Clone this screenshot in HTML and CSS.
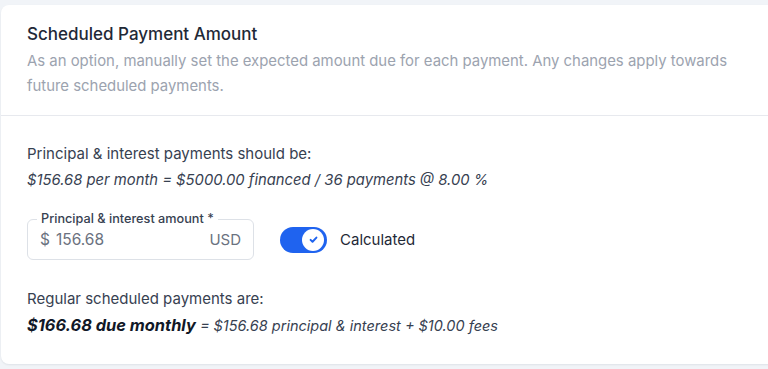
FILE: index.html
```html
<!DOCTYPE html>
<html lang="en">
<head>
    <meta charset="UTF-8">
    <meta name="viewport" content="width=device-width, initial-scale=1.0">
    <title>Scheduled Payment Amount</title>
    <link rel="stylesheet" href="styles.css">
</head>
<body>
    <div class="card">
        <div class="card-header">
            <h2 class="card-title">Scheduled Payment Amount</h2>
            <p class="card-desc">As an option, manually set the expected amount due for each payment. Any changes apply towards future scheduled payments.</p>
        </div>
        <div class="card-body">
            <div class="summary">
                <div>Principal &amp; interest payments should be:</div>
                <div class="formula">$156.68 per month = $5000.00 financed / 36 payments @ 8.00 %</div>
            </div>

            <div class="amount-row">
                <div class="field">
                    <span class="field-label">Principal &amp; interest amount *</span>
                    <span class="field-prefix">$</span>
                    <input type="text" class="field-input" value="156.68">
                    <span class="field-suffix">USD</span>
                </div>
                <label class="switch">
                    <span class="switch-track">
                        <span class="switch-knob">
                            <svg viewBox="0 0 20 20" width="13" height="13">
                                <path d="M5.5 10.5l3 3 6-6.5" fill="none" stroke="#1f63ef" stroke-width="3" stroke-linecap="round" stroke-linejoin="round"/>
                            </svg>
                        </span>
                    </span>
                    <span class="switch-label">Calculated</span>
                </label>
            </div>

            <div class="summary">
                <div>Regular scheduled payments are:</div>
                <div class="formula formula-due"><strong class="due">$166.68 due monthly</strong> = $156.68 principal &amp; interest + $10.00 fees</div>
            </div>
        </div>
    </div>
</body>
</html>
```

FILE: styles.css
```css
* {
    margin: 0;
    padding: 0;
    box-sizing: border-box;
}

html, body {
    overflow: hidden;
}

body {
    background-color: #f1f4f8;
    font-family: Inter, 'Noto Sans', sans-serif;
    color: #374151;
    padding: 5px 0 0 1px;
    min-height: 100vh;
}

.card {
    width: calc(100% + 20px);
    background: #fff;
    border-radius: 8px;
    box-shadow: 0 1px 2px rgba(15, 23, 42, 0.08);
}

.card-header {
    padding: 17px 26px 17px;
    border-bottom: 1px solid #e7e9ee;
}

.card-title {
    font-size: 17px;
    font-weight: 500;
    line-height: 24px;
    color: #1f2937;
}

.card-desc {
    margin-top: 3px;
    font-size: 14.9px;
    line-height: 24.5px;
    color: #9ca3af;
    max-width: 710px;
}

.card-body {
    padding: 25px 26px 25px;
}

.summary {
    font-size: 15px;
    line-height: 26px;
    color: #374151;
}

.formula {
    font-style: italic;
    font-size: 14.8px;
}

.formula-due {
    font-size: 14.5px;
}

.due {
    font-size: 16.4px;
    font-weight: 700;
    color: #111827;
}

.amount-row {
    display: flex;
    align-items: center;
    gap: 26px;
    margin: 26px 0;
}

.field {
    position: relative;
    display: flex;
    align-items: center;
    width: 227px;
    height: 41px;
    padding: 0 12px;
    border: 1px solid #dde1e7;
    border-radius: 6px;
    font-size: 15.5px;
    color: #6b7280;
}

.field-label {
    position: absolute;
    top: -8px;
    left: 9px;
    padding: 0 4px;
    background: #fff;
    font-size: 12.7px;
    font-weight: 500;
    line-height: 14px;
    color: #374151;
}

.field-prefix {
    margin-right: 6px;
}

.field-input {
    flex-grow: 1;
    min-width: 0;
    border: none;
    outline: none;
    background: transparent;
    font-family: inherit;
    font-size: 15.5px;
    color: #6b7280;
}

.field-suffix {
    font-size: 15px;
}

.switch {
    display: flex;
    align-items: center;
    gap: 13px;
}

.switch-track {
    display: flex;
    align-items: center;
    justify-content: flex-end;
    width: 47px;
    height: 26px;
    padding: 0 3px;
    border-radius: 13px;
    background: #1f63ef;
}

.switch-knob {
    display: flex;
    align-items: center;
    justify-content: center;
    width: 22px;
    height: 22px;
    border-radius: 50%;
    background: #fff;
}

.switch-label {
    font-size: 15px;
    color: #1f2937;
}
```
